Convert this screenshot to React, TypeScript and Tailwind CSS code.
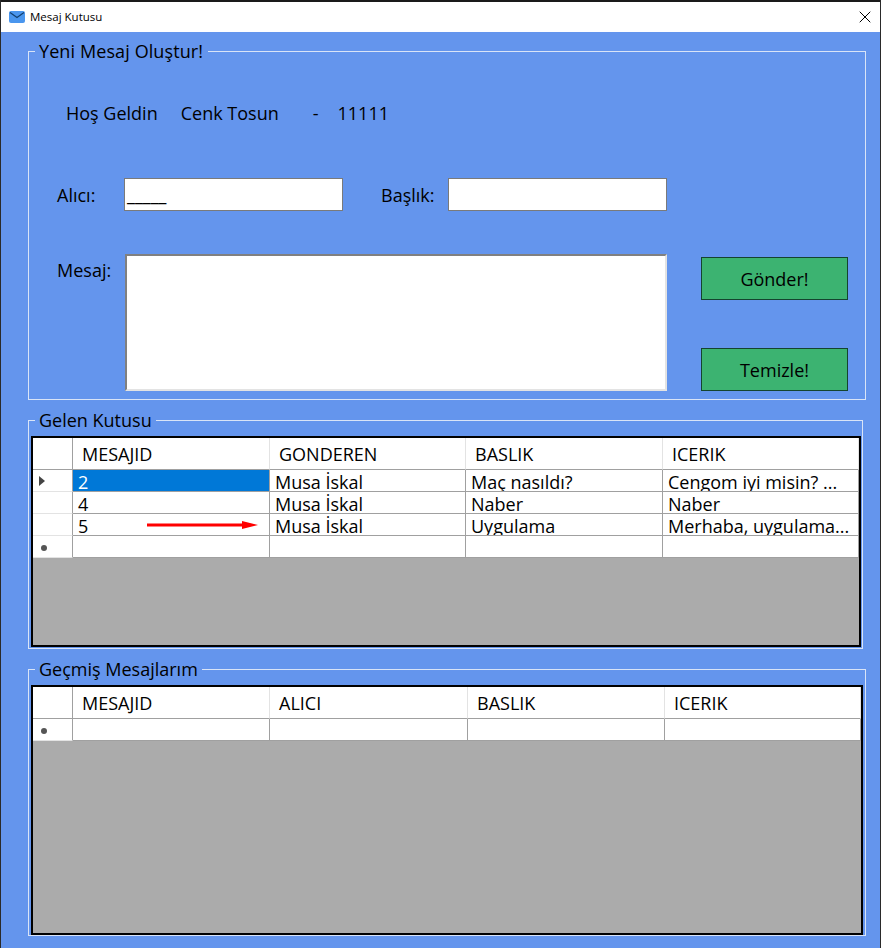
import { Fragment } from "react";
import { X } from "lucide-react";

const font = "font-['Open_Sans','Noto_Sans',sans-serif]";

type GridProps = {
  columns: string[];
  template: string;
  rows: string[][];
  size: string;
};

function RowMarker({ kind }: { kind: "current" | "new" | "none" }) {
  return (
    <div className="flex h-[22px] items-center border-b border-r border-b-[#e3e3e3] border-r-[#a0a0a0] pl-[6px]">
      {kind === "current" && (
        <svg width="6" height="10" viewBox="0 0 6 10">
          <path d="M0 0 L6 5 L0 10 Z" fill="#444" />
        </svg>
      )}
      {kind === "new" && <span className="ml-[2px] mt-[2px] h-[6px] w-[6px] rounded-full bg-[#555]" />}
    </div>
  );
}

function DataGrid({ columns, template, rows, size }: GridProps) {
  return (
    <div className={`ml-[2px] mt-[4px] overflow-hidden border-2 border-black bg-[#ababab] ${size}`}>
      <div className={`grid ${template}`}>
        <div className="h-[32px] border-b border-r border-b-[#a0a0a0] border-r-[#a0a0a0] bg-white" />
        {columns.map(col => (
          <div
            key={col}
            className="flex h-[32px] items-center border-b border-r border-b-[#a0a0a0] border-r-[#e3e3e3] bg-white pl-[9px] pt-[1px] text-[18px]"
          >
            {col}
          </div>
        ))}
        {rows.map((row, i) => (
          <Fragment key={i}>
            <div className="bg-white">
              <RowMarker kind={i === 0 ? "current" : "none"} />
            </div>
            {row.map((cell, j) => (
              <div
                key={j}
                className={`h-[22px] overflow-hidden whitespace-nowrap border-b border-r border-[#a0a0a0] pl-[5px] text-[18px] leading-[25px] ${
                  i === 0 && j === 0 ? "bg-[#0078d7] text-white" : "bg-white"
                }`}
              >
                {cell}
              </div>
            ))}
          </Fragment>
        ))}
        <div className="bg-white">
          <RowMarker kind="new" />
        </div>
        {columns.map(col => (
          <div key={col} className="h-[22px] border-b border-r border-[#a0a0a0] bg-white" />
        ))}
      </div>
    </div>
  );
}

export default function App() {
  return (
    <div className={`h-[948px] w-[881px] overflow-hidden border-x border-x-[#2a2a2a] bg-[#6495ed] text-black ${font}`}>
      {/* title bar */}
      <div className="flex h-[32px] items-center border-t-2 border-[#1a1a1a] bg-white pl-[8px] pr-[5px]">
        <svg width="16" height="12" viewBox="0 0 16 12" className="mr-[5px]">
          <rect width="16" height="12" rx="2" fill="#4a96ee" />
          <path d="M1 1.5 L8 6.5 L15 1.5" stroke="#12406f" strokeWidth="1.2" fill="none" />
        </svg>
        <span className="text-[11.5px]">Mesaj Kutusu</span>
        <X className="ml-auto" size={20} strokeWidth={1.2} />
      </div>

      <div className="flex flex-col pl-[27px] text-[18px] leading-[24px]">
        <fieldset className="mt-[7px] h-[361px] w-[838px] border border-[#d9e4f7]">
          <legend className="ml-[6px] pl-[4px] pr-[5px] tracking-[0.1px]">Yeni Mesaj Oluştur!</legend>
          <div className="mt-[38px] flex pl-[37px]">
            <span>Hoş Geldin</span>
            <span className="ml-[23px]">Cenk Tosun</span>
            <span className="ml-[34px]">-</span>
            <span className="ml-[19px]">11111</span>
          </div>
          <div className="mt-[53px] flex items-center">
            <span className="ml-[28px] w-[67px]">Alıcı:</span>
            <div className="h-[33px] w-[219px] border border-[#7a7a7a] bg-white pl-[2px] pt-[2px] leading-[26px]">_____</div>
            <span className="ml-[38px] w-[67px]">Başlık:</span>
            <div className="h-[33px] w-[219px] border border-[#7a7a7a] bg-white" />
          </div>
          <div className="mt-[43px] flex">
            <span className="ml-[28px] w-[68px] pt-[4px]">Mesaj:</span>
            <div className="h-[137px] w-[542px] border-2 border-b-[#e3e3e3] border-l-[#808080] border-r-[#e3e3e3] border-t-[#808080] bg-white" />
            <div className="ml-[34px] flex h-[137px] flex-col justify-between pt-[3px]">
              <button className="h-[43px] w-[147px] border border-[#14442f] bg-[#3cb371]">Gönder!</button>
              <button className="h-[43px] w-[147px] border border-[#14442f] bg-[#3cb371]">Temizle!</button>
            </div>
          </div>
        </fieldset>

        <fieldset className="relative mt-[8px] h-[241px] w-[835px] border border-[#d9e4f7]">
          <legend className="ml-[6px] px-[4px]">Gelen Kutusu</legend>
          <DataGrid
            columns={["MESAJID", "GONDEREN", "BASLIK", "ICERIK"]}
            template="grid-cols-[40px_197px_196px_197px_196px]"
            size="h-[211px] w-[830px]"
            rows={[
              ["2", "Musa İskal", "Maç nasıldı?", "Cengom iyi misin? ..."],
              ["4", "Musa İskal", "Naber", "Naber"],
              ["5", "Musa İskal", "Uygulama", "Merhaba, uygulama..."],
            ]}
          />
          <svg width="112" height="10" viewBox="0 0 112 10" className="absolute left-[118px] top-[88px]">
            <rect x="0" y="3.5" width="96" height="3" fill="#f00" />
            <path d="M95 1 L111 5 L95 9 Z" fill="#f00" />
          </svg>
        </fieldset>

        <fieldset className="mt-[8px] h-[279px] w-[838px] border border-[#d9e4f7]">
          <legend className="ml-[6px] px-[4px]">Geçmiş Mesajlarım</legend>
          <DataGrid
            columns={["MESAJID", "ALICI", "BASLIK", "ICERIK"]}
            template="grid-cols-[40px_197px_198px_197px_196px]"
            size="h-[250px] w-[832px]"
            rows={[]}
          />
        </fieldset>
      </div>
    </div>
  );
}
